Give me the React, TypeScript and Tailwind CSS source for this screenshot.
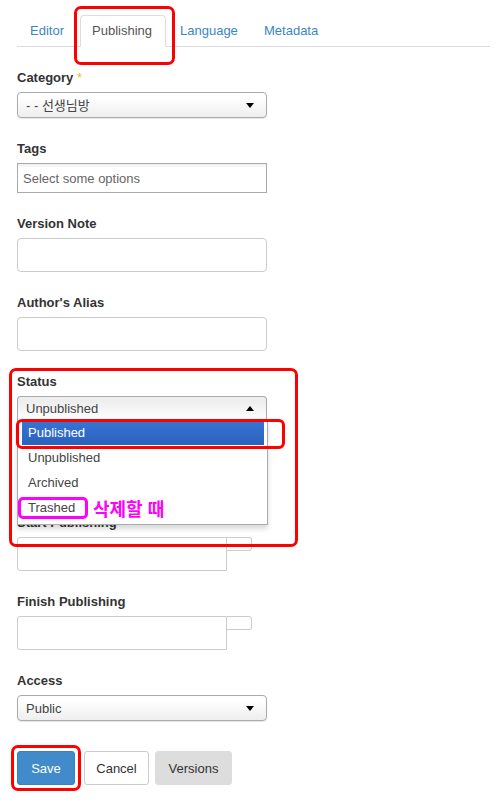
import React from "react";

const FONT = '"Liberation Sans", Arial, "Noto Sans CJK KR", sans-serif';

const Label = ({ children }: { children: React.ReactNode }) => (
  <div className="h-4 leading-[18px] text-[13px] font-bold text-[#333] mb-[7px]">{children}</div>
);

const Arrow = ({ up }: { up?: boolean }) => (
  <span
    className={
      up
        ? "w-0 h-0 border-x-[4px] border-x-transparent border-b-[5px] border-b-black"
        : "w-0 h-0 border-x-[4px] border-x-transparent border-t-[5px] border-t-black"
    }
  />
);

const Chosen = ({ value }: { value: string }) => (
  <div className="w-[250px] h-[26px] border border-[#aaa] rounded-[4px] bg-linear-to-b from-white from-20% to-[#eee] shadow-[0_1px_1px_rgba(0,0,0,0.1)] flex items-center justify-between pl-[8px] pr-[12px] text-[13px] text-[#444]">
    <span className="pt-px">{value}</span>
    <Arrow />
  </div>
);

const TextBox = () => <div className="w-[250px] h-[34px] border border-[#ccc] rounded-[4px] bg-white" />;

const DateBox = () => (
  <div className="flex items-start">
    <div className="w-[210px] h-[34px] border border-[#ccc] rounded-l-[3px] bg-white" />
    <div className="w-[25px] h-[14px] border border-l-0 border-[#ccc] rounded-r-[3px] bg-white" />
  </div>
);

const statusOptions = ["Published", "Unpublished", "Archived", "Trashed"];

export default function App() {
  return (
    <div className="relative w-[504px] h-[806px] bg-white overflow-hidden" style={{ fontFamily: FONT }}>
      {/* tabs */}
      <div className="mt-[15px] ml-[17px] mr-[14px] flex border-b border-[#ddd] text-[13px]">
        <div className="w-[63px] h-[31px] pl-[13px] pt-px flex items-center text-[#3b86c6]">Editor</div>
        <div className="w-[86px] h-[32px] -mb-px pl-[11px] flex items-center text-[#555] bg-white border border-[#ddd] border-b-white rounded-t-[4px]">
          Publishing
        </div>
        <div className="w-[85px] h-[31px] pl-[14px] pt-px flex items-center text-[#3b86c6]">Language</div>
        <div className="h-[31px] pl-[13px] pt-px flex items-center text-[#3b86c6]">Metadata</div>
      </div>

      {/* form */}
      <div className="pl-[17px] pt-[22px] flex flex-col">
        <div className="mb-[22px]">
          <Label>
            Category <span className="text-[#f0c000] font-normal">*</span>
          </Label>
          <Chosen value="- - 선생님방" />
        </div>

        <div className="mb-[22px]">
          <Label>Tags</Label>
          <div className="w-[250px] h-[30px] border border-[#aaa] bg-linear-to-b from-[#eee] from-0% to-white to-15% flex items-center pl-[5px] pt-px text-[13px] text-[#666]">
            Select some options
          </div>
        </div>

        <div className="mb-[22px]">
          <Label>Version Note</Label>
          <TextBox />
        </div>

        <div className="mb-[22px]">
          <Label>Author's Alias</Label>
          <TextBox />
        </div>

        <div className="mb-[92px]">
          <Label>Status</Label>
          <div className="relative w-[250px] h-[26px]">
            <div className="w-[250px] h-[24px] border border-b-0 border-[#aaa] rounded-t-[4px] bg-linear-to-b from-[#eee] from-20% to-white flex items-center justify-between pl-[8px] pr-[12px] text-[13px] text-[#444]">
              <span className="pt-px">Unpublished</span>
              <Arrow up />
            </div>
            <div className="absolute top-[24px] left-0 z-10 w-[251px] border border-t-0 border-[#aaa] bg-white shadow-[0_4px_5px_rgba(0,0,0,0.15)] pl-[4px] pr-[3px] pb-[4px]">
              {statusOptions.map((o, i) => (
                <div
                  key={o}
                  className={
                    i === 0
                      ? "h-[25px] pl-[6px] pt-px flex items-center text-[13px] text-white bg-linear-to-b from-[#3875d7] to-[#2a62bc]"
                      : "h-[25px] pl-[6px] pt-px flex items-center text-[13px] text-[#444]"
                  }
                >
                  {o}
                </div>
              ))}
            </div>
          </div>
        </div>

        <div className="mb-[22px]">
          <Label>Start Publishing</Label>
          <DateBox />
        </div>

        <div className="mb-[22px]">
          <Label>Finish Publishing</Label>
          <DateBox />
        </div>

        <div className="mb-[30px]">
          <Label>Access</Label>
          <Chosen value="Public" />
        </div>

        <div className="flex text-[13px]">
          <div className="w-[58px] h-[34px] pt-px rounded-[3px] bg-[#428bca] border border-[#3b80bd] text-white flex items-center justify-center">
            Save
          </div>
          <div className="ml-[9px] w-[65px] h-[34px] pt-px rounded-[3px] bg-white border border-[#ccc] text-[#333] flex items-center justify-center">
            Cancel
          </div>
          <div className="ml-[6px] w-[77px] h-[34px] pt-px rounded-[3px] bg-[#ddd] border border-[#ddd] text-[#333] flex items-center justify-center">
            Versions
          </div>
        </div>
      </div>

      {/* annotations */}
      <div className="absolute left-[74px] top-[6px] w-[101px] h-[59px] border-[3px] border-[#f00] rounded-[7px] pointer-events-none" />
      <div className="absolute left-[9px] top-[368px] w-[289px] h-[179px] border-[3px] border-[#f00] rounded-[7px] pointer-events-none z-20" />
      <div className="absolute left-[16px] top-[419px] w-[269px] h-[30px] border-[3px] border-[#f00] rounded-[6px] pointer-events-none z-20" />
      <div className="absolute left-[18px] top-[497px] w-[70px] h-[22px] border-[3px] border-[#f0f] rounded-[5px] pointer-events-none z-20" />
      <div className="absolute left-[93px] top-[498px] h-[24px] flex items-center text-[18px] font-bold text-[#f0f] z-20 leading-none">
        삭제할 때
      </div>
      <div className="absolute left-[11px] top-[745px] w-[70px] h-[46px] border-[3px] border-[#f00] rounded-[7px] pointer-events-none" />
    </div>
  );
}
